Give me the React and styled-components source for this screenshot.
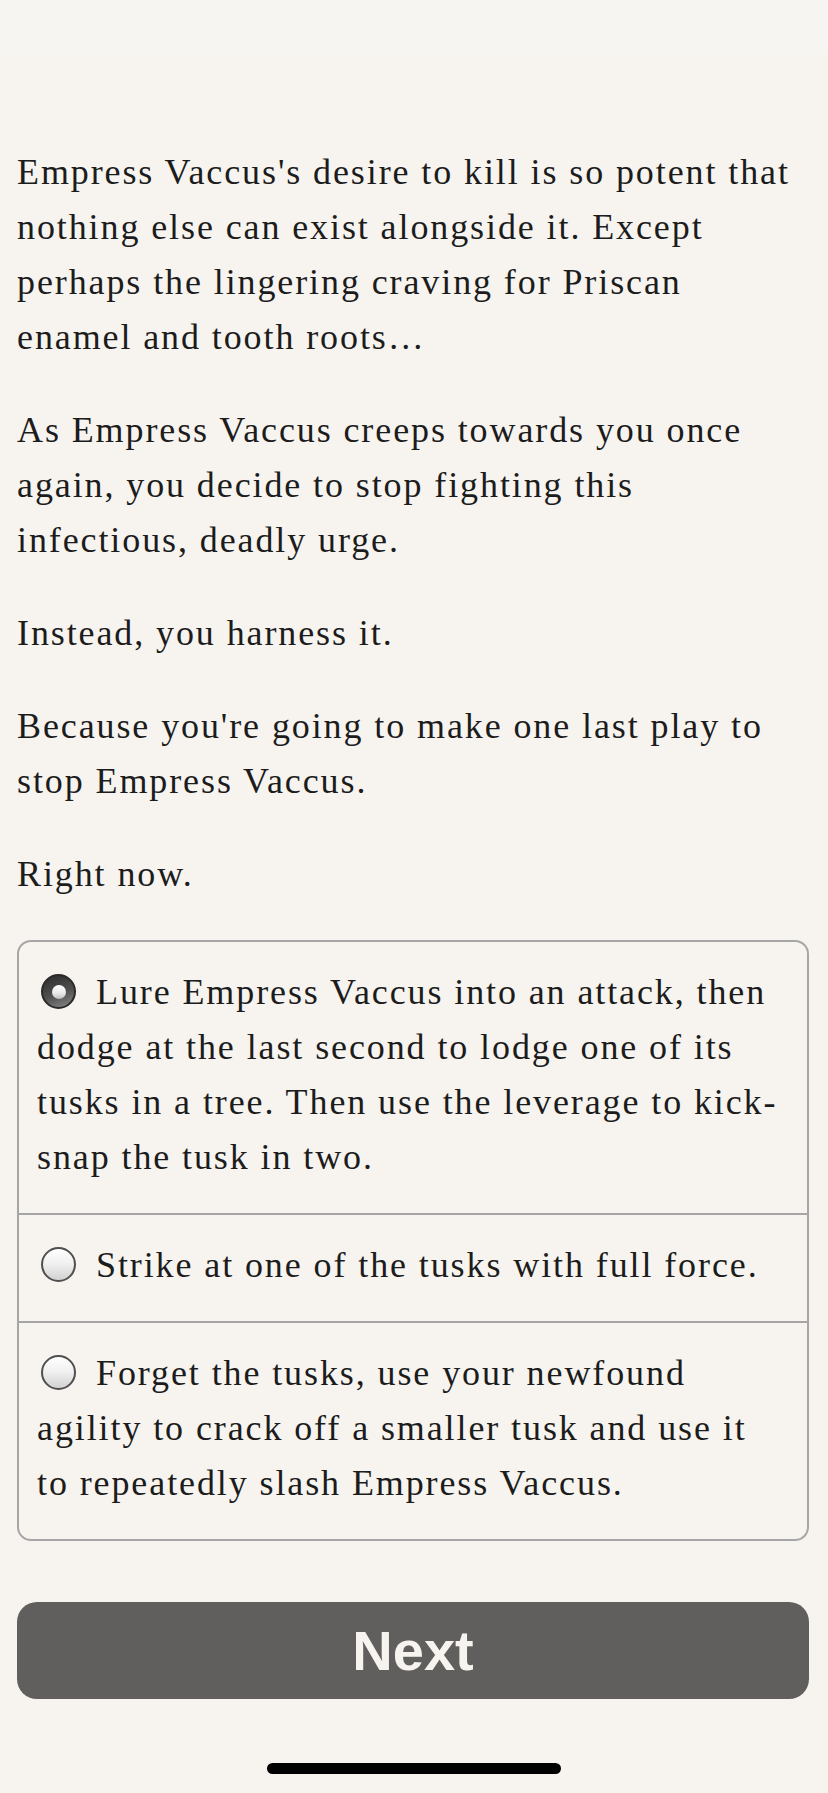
import React from "react";
import styled, { createGlobalStyle } from "styled-components";

const GlobalStyle = createGlobalStyle`
  html, body {
    margin: 0;
    padding: 0;
    background: #f7f4f0;
  }
  * { box-sizing: border-box; }
`;

const Page = styled.div`
  min-height: 1793px;
  display: flex;
  flex-direction: column;
  background: #f7f4f0;
`;

const StatusBar = styled.div`
  height: 55px;
  background: #f6f5f1;
`;

const Content = styled.main`
  display: flex;
  flex-direction: column;
  padding: 90px 19px 0 17px;
`;

const Story = styled.section`
  display: flex;
  flex-direction: column;
  gap: 38px;
`;

const serifText = `
  font-family: "Liberation Serif", "Times New Roman", serif;
  font-size: 36px;
  line-height: 55px;
  letter-spacing: 1.9px;
  color: #1c1c1c;
`;

const Paragraph = styled.p`
  margin: 0;
  ${serifText}
`;

const ChoiceList = styled.div`
  margin-top: 38px;
  border: 2px solid #a6a6a6;
  border-radius: 14px;
  overflow: hidden;
`;

const Choice = styled.label`
  display: block;
  padding: 23px 18px 28px;
  ${serifText}
  & + & {
    border-top: 2px solid #a6a6a6;
  }
`;

const Radio = styled.span`
  position: relative;
  display: inline-block;
  width: 35px;
  height: 35px;
  margin: 0 20px 0 4px;
  vertical-align: -5px;
  border-radius: 50%;
  border: 2px solid ${(p) => (p.$checked ? "#2a2a2a" : "#4f4f4f")};
  background: ${(p) =>
    p.$checked
      ? "linear-gradient(160deg, #2c2c2c 0%, #4f4f4f 55%, #8a8a8a 100%)"
      : "linear-gradient(180deg, #ffffff 0%, #f1f1f1 45%, #d2d2d2 100%)"};
  &::after {
    content: "";
    display: ${(p) => (p.$checked ? "block" : "none")};
    position: absolute;
    left: 50%;
    top: 50%;
    width: 14px;
    height: 14px;
    margin: -7px 0 0 -7px;
    border-radius: 50%;
    background: linear-gradient(180deg, #ffffff 0%, #e8e8e8 60%, #bdbdbd 100%);
  }
`;

const NextButton = styled.button`
  margin-top: 61px;
  height: 97px;
  width: 100%;
  border: none;
  border-radius: 20px;
  background: #615f5d;
  color: #f7f4f0;
  font-family: "Liberation Sans", Arial, sans-serif;
  font-weight: 700;
  font-size: 56px;
  line-height: 1;
  padding: 0;
`;

const HomeIndicator = styled.div`
  align-self: center;
  margin-top: 64px;
  width: 294px;
  height: 11px;
  border-radius: 6px;
  background: #000;
`;

const paragraphs = [
  ["Empress Vaccus's desire to kill is so potent that", "nothing else can exist alongside it. Except", "perhaps the lingering craving for Priscan", "enamel and tooth roots…"],
  ["As Empress Vaccus creeps towards you once", "again, you decide to stop fighting this", "infectious, deadly urge."],
  ["Instead, you harness it."],
  ["Because you're going to make one last play to", "stop Empress Vaccus."],
  ["Right now."],
];

const choices = [
  {
    checked: true,
    lines: ["Lure Empress Vaccus into an attack, then", "dodge at the last second to lodge one of its", "tusks in a tree. Then use the leverage to kick-", "snap the tusk in two."],
  },
  { checked: false, lines: ["Strike at one of the tusks with full force."] },
  {
    checked: false,
    lines: ["Forget the tusks, use your newfound", "agility to crack off a smaller tusk and use it", "to repeatedly slash Empress Vaccus."],
  },
];

const withBreaks = (lines) =>
  lines.map((line, i) => (
    <React.Fragment key={i}>
      {line}
      {i < lines.length - 1 && <br />}
    </React.Fragment>
  ));

export default function App() {
  return (
    <>
      <GlobalStyle />
      <Page>
        <StatusBar />
        <Content>
          <Story>
            {paragraphs.map((p, i) => (
              <Paragraph key={i}>{withBreaks(p)}</Paragraph>
            ))}
          </Story>
          <ChoiceList>
            {choices.map((c, i) => (
              <Choice key={i}>
                <Radio $checked={c.checked} />
                {withBreaks(c.lines)}
              </Choice>
            ))}
          </ChoiceList>
          <NextButton>Next</NextButton>
        </Content>
        <HomeIndicator />
      </Page>
    </>
  );
}
